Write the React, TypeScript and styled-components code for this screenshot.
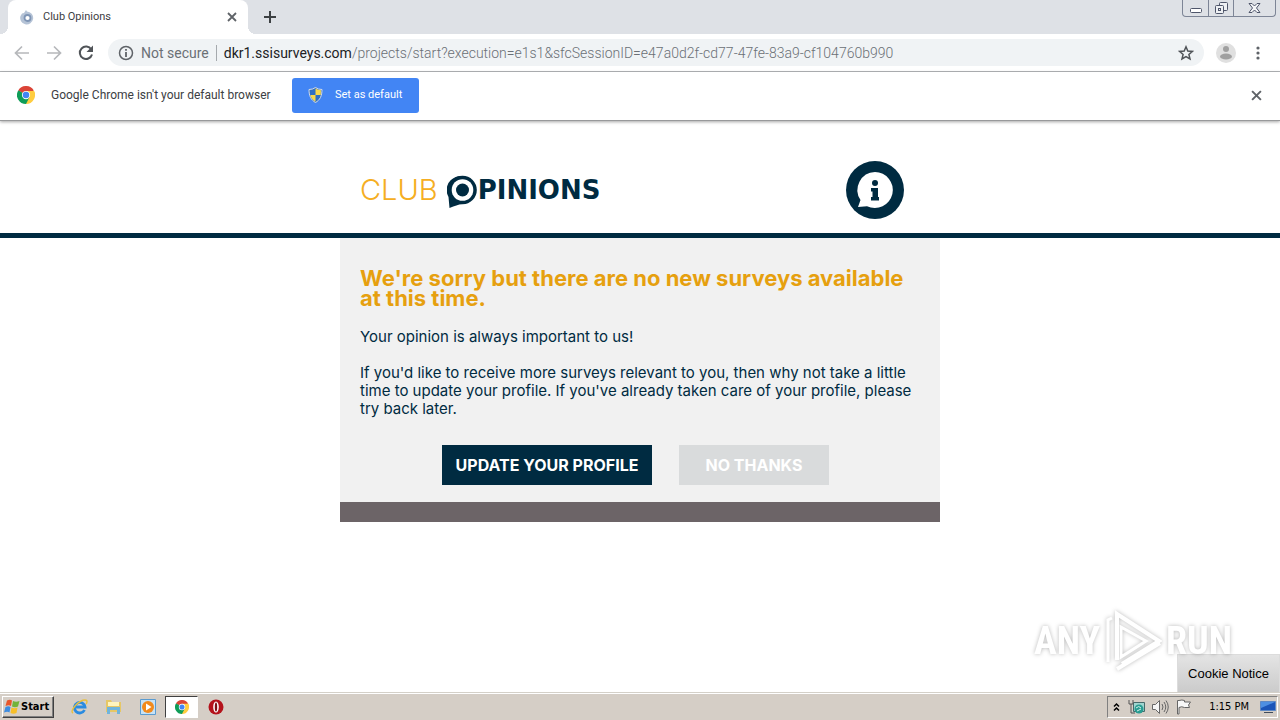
import React from 'react';
import styled, { createGlobalStyle } from 'styled-components';

const NAVY = '#002b41';
const UI_FONT = '"DejaVu Sans Condensed", "Noto Sans", sans-serif';

const GlobalStyle = createGlobalStyle`
  *, *::before, *::after { box-sizing: border-box; }
  body { margin: 0; background: #fff; font-family: "Noto Sans", sans-serif; }
  button { border: 0; padding: 0; background: none; font: inherit; color: inherit; }
  svg { display: block; flex: none; }
`;

const Desktop = styled.div`
  display: flex;
  flex-direction: column;
  min-height: 100vh;
`;

/* ---------- browser chrome ---------- */

const TabStrip = styled.header`
  display: flex;
  height: 34px;
  padding: 0 4px 0 8px;
  background: #dee1e6;
`;

const Tab = styled.div`
  position: relative;
  display: flex;
  align-items: center;
  gap: 8px;
  width: 240px;
  padding: 0 8px 0 12px;
  border-radius: 8px 8px 0 0;
  background: #fff;
  color: #3c4043;
  font: 11px/16px Roboto, sans-serif;

  &::before, &::after {
    content: "";
    position: absolute;
    bottom: 0;
    width: 8px;
    height: 8px;
  }
  &::before { left: -8px; background: radial-gradient(circle at 0 0, #dee1e6 8px, #fff 8px); }
  &::after { right: -8px; background: radial-gradient(circle at 100% 0, #dee1e6 8px, #fff 8px); }
`;

const TabTitle = styled.span`
  flex: 1;
`;

const IconButton = styled.button<{ $size?: number }>`
  display: grid;
  place-items: center;
  flex: none;
  width: ${(p) => p.$size ?? 16}px;
  height: ${(p) => p.$size ?? 16}px;
`;

const NewTab = styled(IconButton)`
  align-self: center;
  margin-left: 12px;
`;

const WindowControls = styled.div`
  display: flex;
  height: 17px;
  margin-left: auto;
  border: 1px solid #7d8596;
  border-top: 0;
  border-radius: 0 0 4px 4px;
`;

const WindowButton = styled.button<{ $wide?: boolean }>`
  display: grid;
  place-items: center;
  width: ${(p) => (p.$wide ? 42 : 25)}px;

  & + & { border-left: 1px solid #7d8596; }
`;

const Toolbar = styled.nav`
  display: flex;
  align-items: center;
  gap: 12px;
  height: 38px;
  padding: 0 12px;
  border-bottom: 1px solid #b4b6b9;
`;

const Omnibox = styled.div`
  display: flex;
  align-items: center;
  flex: 1;
  height: 27px;
  padding: 0 10px;
  border-radius: 14px;
  background: #f0f3f5;
  color: #6b7075;
  font: 14px/20px Roboto, sans-serif;
`;

const Security = styled.span`
  margin-left: 7px;
  padding-right: 7px;
  border-right: 1px solid #a5a9ad;
  line-height: 16px;
`;

const Address = styled.span`
  flex: 1;
  margin-left: 7px;
  white-space: nowrap;
  font-weight: 300;

  b { color: #202124; font-weight: 400; }
`;

const InfoBar = styled.section`
  position: relative;
  display: flex;
  align-items: center;
  height: 49px;
  padding: 0 16px 2px 17px;
  border-bottom: 1px solid #98999b;
  box-shadow: 0 1px 3px rgba(0, 0, 0, 0.35);
  color: #3c4043;
  font: 12px/16px Roboto, sans-serif;
`;

const InfoText = styled.p`
  min-width: 228px;
  margin: 0 13px 0 16px;
`;

const DefaultButton = styled.button`
  display: flex;
  align-items: center;
  gap: 12px;
  width: 127px;
  height: 35px;
  padding-left: 16px;
  border-radius: 3px;
  background: #4285f4;
  color: #fff;
  font-size: 11px;
  white-space: nowrap;
`;

const Spacer = styled.div`
  flex: 1;
`;

/* ---------- web page ---------- */

const Page = styled.main`
  position: relative;
  flex: 1;
`;

const SiteHeader = styled.div`
  padding-top: 40px;
  border-bottom: 5px solid ${NAVY};
`;

const Column = styled.div`
  width: 100%;
  max-width: 600px;
  margin: 0 auto;
`;

const HeaderRow = styled(Column)`
  display: flex;
  justify-content: space-between;
  align-items: center;
  padding: 0 36px 14px 20px;
`;

const Brand = styled.a`
  display: flex;
  align-items: center;
  color: ${NAVY};
  font: 700 26px/32px "DejaVu Sans", sans-serif;
  text-decoration: none;

  svg { margin-top: 4px; }
`;

const BrandClub = styled.span`
  margin-right: 9px;
  color: #f5ae22;
  font-family: Inter, sans-serif;
  font-weight: 300;
  font-size: 29px;
`;

const Card = styled(Column)`
  padding: 30px 20px 17px;
  background: #f1f1f1;
  color: ${NAVY};
  font: 15px/18px Inter, sans-serif;

  h1 { margin: 0 0 20px; color: #e6a00f; font-size: 22px; line-height: 20px; }
  p { margin: 0 0 18px; }
`;

const Actions = styled.div`
  display: flex;
  justify-content: center;
  gap: 27px;
  margin: 27px 9px 0 0;
`;

const ActionButton = styled.button<{ $muted?: boolean }>`
  width: ${(p) => (p.$muted ? 150 : 210)}px;
  height: 40px;
  background: ${(p) => (p.$muted ? '#d9dbdc' : NAVY)};
  color: #fff;
  font-weight: 700;
  font-size: 16px;
  white-space: nowrap;
`;

const CardFooter = styled(Column)`
  height: 20px;
  background: #6c6467;
`;

const CookieNotice = styled.button`
  position: absolute;
  right: 0;
  bottom: 0;
  height: 38px;
  padding: 0 10px;
  border: 1px solid #dcdcdc;
  border-bottom: 0;
  background: linear-gradient(#e4e4e4, #cbcbcb);
  color: #000;
  font: 13px/20px "Liberation Sans", sans-serif;
`;

const Watermark = styled.div`
  position: absolute;
  right: 48px;
  bottom: 20px;
  display: flex;
  align-items: center;
  gap: 4px;
  color: #fff;
  font: 700 38px/60px "Liberation Sans Narrow", "Roboto Condensed", Roboto, sans-serif;
  filter: drop-shadow(0 0 2px rgba(0, 0, 0, 0.28));
  pointer-events: none;
`;

/* ---------- taskbar ---------- */

const Taskbar = styled.footer`
  display: flex;
  align-items: center;
  height: 28px;
  padding: 2px;
  border-top: 1px solid #d4d0c8;
  box-shadow: inset 0 1px #fff;
  background: #d5cec6;
  color: #000;
  font: 11px/16px ${UI_FONT};
`;

const StartButton = styled.button`
  display: flex;
  align-items: center;
  gap: 1px;
  height: 22px;
  width: 52px;
  padding: 0 1px;
  border: 1px solid;
  border-color: #fff #404040 #404040 #fff;
  box-shadow: inset -1px -1px #808080;
  font: 700 11px/16px ${UI_FONT};
`;

const Launcher = styled.div`
  display: flex;
  gap: 1px;
  margin-left: 9px;
`;

const LaunchButton = styled.button<{ $active?: boolean }>`
  display: grid;
  place-items: center;
  width: 33px;
  height: 22px;
  border: 1px solid;
  border-color: ${(p) => (p.$active ? '#404040 #fff #fff #404040' : 'transparent')};
  background: ${(p) => (p.$active ? '#fff' : 'none')};
`;

const Tray = styled.div`
  display: flex;
  align-items: center;
  gap: 7px;
  height: 22px;
  margin-left: auto;
  padding: 0 1px 0 4px;
  border: 1px solid;
  border-color: #808080 #fff #fff #808080;
`;

const Clock = styled.time`
  margin: 0 4px 0 10px;
  white-space: nowrap;
`;

/* ---------- drawings ---------- */

const Cross = ({ size = 9 }: { size?: number }) => (
  <svg width={size} height={size} viewBox="0 0 10 10">
    <path d="M1 1l8 8M9 1l-8 8" stroke="#5f6368" strokeWidth="1.8" />
  </svg>
);

const ChromeLogo = ({ size }: { size: number }) => (
  <svg width={size} height={size} viewBox="0 0 48 48">
    <path d="M24 24L3.2 12A24 24 0 0 1 44.8 12Z" fill="#db4437" />
    <path d="M24 24L44.8 12A24 24 0 0 1 24 48Z" fill="#ffcd40" />
    <path d="M24 24V48A24 24 0 0 1 3.2 12Z" fill="#0f9d58" />
    <path d="M24 13H45.3A24 24 0 0 1 48 24L33.5 29.5Z" fill="#ffcd40" />
    <path d="M14.5 29.5L3.2 12 24 24ZM24 48L33.5 29.5 20 34Z" fill="#0f9d58" />
    <circle cx="24" cy="24" r="11" fill="#fff" />
    <circle cx="24" cy="24" r="8.7" fill="#4285f4" />
  </svg>
);

const Favicon = () => (
  <svg width="15" height="15" viewBox="0 0 15 15">
    <path d="M6 0l1 1.5a6.500 6.500 0 1 1-6.500 4.500l1.500-2.500 2-.5z" fill="#b5c3d6" />
    <circle cx="7.5" cy="8" r="3" fill="#fff" stroke="#7f95b5" strokeWidth="1.8" />
  </svg>
);

const Arrow = ({ back }: { back?: boolean }) => (
  <svg width="16" height="16" viewBox="0 0 16 16" fill="none" stroke="#b6b8bb" strokeWidth="1.7">
    {back ? <path d="M15 8H2M8 1.5L1.5 8 8 14.5" /> : <path d="M1 8h13M8 1.5L14.5 8 8 14.5" />}
  </svg>
);

const Reload = () => (
  <svg width="16" height="16" viewBox="0 0 16 16">
    <path d="M13.3 4.5A6.200 6.200 0 1 0 14 9.500" fill="none" stroke="#505458" strokeWidth="2" />
    <path d="M15 .5v6.500H8.500z" fill="#505458" />
  </svg>
);

const InfoCircle = () => (
  <svg width="16" height="16" viewBox="0 0 16 16">
    <circle cx="8" cy="8" r="6.5" fill="none" stroke="#5f6368" strokeWidth="1.5" />
    <path d="M8 7v5M8 4v1.700" stroke="#5f6368" strokeWidth="1.8" />
  </svg>
);

const Star = () => (
  <svg width="16" height="16" viewBox="0 0 16 16">
    <path
      d="M8 1.800l1.800 4.200 4.600.4-3.500 3 1.100 4.500L8 11.500l-4 2.400 1.100-4.500-3.500-3 4.600-.4z"
      fill="none"
      stroke="#505458"
      strokeWidth="1.5"
    />
  </svg>
);

const Avatar = () => (
  <svg width="20" height="20" viewBox="0 0 20 20">
    <circle cx="10" cy="10" r="10" fill="#e0e0e0" />
    <circle cx="10" cy="6" r="3" fill="#a0a0a0" />
    <ellipse cx="10" cy="13.5" rx="6" ry="3" fill="#a0a0a0" />
  </svg>
);

const Dots = () => (
  <svg width="16" height="16" viewBox="0 0 16 16" fill="#5f6368">
    <circle cx="8" cy="3" r="1.6" />
    <circle cx="8" cy="8" r="1.6" />
    <circle cx="8" cy="13" r="1.6" />
  </svg>
);

const Shield = () => (
  <svg width="15" height="16" viewBox="0 0 15 16">
    <path d="M7.500.5Q10 2.500 14 2.500C14 9 12 13 7.500 15.500 3 13 1 9 1 2.500Q5 2.500 7.500.5z" fill="#2e6fc4" stroke="#d5dbe2" />
    <path d="M7.500 1.500Q10 3 13 3.200L12.700 8H7.500z" fill="#f7d84b" />
    <path d="M7.500 8H2.300c.7 3 2.200 5 5.200 6.700z" fill="#f7d84b" />
  </svg>
);

const BubbleO = () => (
  <svg width="31" height="34" viewBox="0 0 31 34">
    <path d="M2.500 33L1.500 22A14.500 14 0 1 1 15.500 29C11 29.500 8 31 2.500 33z" fill={NAVY} />
    <circle cx="15.500" cy="15" r="14.300" fill={NAVY} />
    <circle cx="15.500" cy="15" r="10.800" fill="#fff" />
    <circle cx="15.500" cy="15" r="6.500" fill={NAVY} />
  </svg>
);

const InfoBubble = () => (
  <svg width="58" height="58" viewBox="0 0 58 58">
    <circle cx="29" cy="29" r="29" fill={NAVY} />
    <path d="M29 11a18 18 0 1 1-8 34.200L12 46l2.500-7A18 18 0 0 1 29 11z" fill="#fff" />
    <circle cx="29" cy="22" r="3" fill={NAVY} />
    <path d="M25 27h7v9h1v3.500h-8V36h1.500v-5.500H25z" fill={NAVY} />
  </svg>
);

const PlayMark = () => (
  <svg width="58" height="62" viewBox="0 0 58 62" fill="none" stroke="#fff" strokeWidth="4">
    <path d="M13 50V4L55 31 18 54" />
    <path d="M4 52V10l4-2M17 17v30l25-16z" strokeWidth="3" />
    <path d="M13 59L56 33" />
  </svg>
);

const WindowsFlag = () => (
  <svg width="16" height="15" viewBox="0 0 16 15">
    <path d="M3 1.500q3-1.500 5 0L7 7Q5 5.500 1.500 7z" fill="#e8562a" />
    <path d="M9 2q3 1.500 6.500 0L14 7.500q-3 1.500-6 0z" fill="#72b33a" />
    <path d="M1.500 8q3-1.500 5 0l-1 5.500q-2-1.500-5.500 0z" fill="#3d8ce0" />
    <path d="M7.500 8.500q3 1.500 6 0L12.500 14q-3 1.500-6 0z" fill="#f7bf29" />
  </svg>
);

const Explorer = () => (
  <svg width="17" height="16" viewBox="0 0 17 16" fill="none">
    <path d="M13.500 11A5.300 5.300 0 1 1 14 8H5" stroke="#2a8be0" strokeWidth="2.8" />
    <path d="M2 14C-2 12 8 1 14 1c3 0 2 3 1 4" stroke="#e8bf3c" strokeWidth="1.4" />
  </svg>
);

const Folder = () => (
  <svg width="17" height="16" viewBox="0 0 17 16">
    <path d="M1 1h5l1 2h9v10H1z" fill="#e6c766" />
    <path d="M3 3h11v4H3z" fill="#fff4bd" />
    <path d="M2 15V8h13v7h-3v-4H5v4z" fill="#70b4dc" />
  </svg>
);

const MediaPlayer = () => (
  <svg width="16" height="16" viewBox="0 0 16 16">
    <path d="M.5.5h15v15H.5z" fill="#c7e2f5" stroke="#5a9bd0" />
    <circle cx="8" cy="8" r="6" fill="#f28a1c" />
    <path d="M6 4.500L11.500 8 6 11.500z" fill="#fff" />
  </svg>
);

const Opera = () => (
  <svg width="16" height="16" viewBox="0 0 16 16">
    <circle cx="8" cy="8" r="7.5" fill="#b4121b" />
    <ellipse cx="8" cy="8" rx="2.8" ry="5.5" fill="#fff" />
    <ellipse cx="8" cy="8" rx="1.2" ry="4.5" fill="#7c1015" />
  </svg>
);

const Network = () => (
  <svg width="17" height="16" viewBox="0 0 17 16">
    <path d="M5.500 3.500h11v9h-11z" fill="#9fd5cf" stroke="#46696a" />
    <path d="M1 1v4h4V1M3 5v9h4" fill="none" stroke="#555" />
    <circle cx="11" cy="10" r="4.5" fill="#299c91" />
    <path d="M8 9q3-3 5 0M9 12l4-2" fill="none" stroke="#d5f1eb" />
  </svg>
);

const Speaker = () => (
  <svg width="17" height="16" viewBox="0 0 17 16" fill="none" stroke="#666">
    <path d="M.5 5.500h3l4-4v13l-4-4h-3z" fill="#f5f5f5" />
    <path d="M10 5q2 3 0 6M12 3q3.500 5 0 10M14 1.500q4.500 6.500 0 13" />
  </svg>
);

const Flag = () => (
  <svg width="16" height="16" viewBox="0 0 16 16" fill="#f8f8f8" stroke="#666">
    <path d="M1.500 1.500h1.500q3-1 5.500 0v1.500h6l-2 3 1 2.500h-5q-3-1.500-5.500 0v6.500H1.500z" />
  </svg>
);

const Monitor = () => (
  <svg width="16" height="14" viewBox="0 0 16 14">
    <path d="M.5 1.500h15v9H.5z" fill="#1c55b8" stroke="#5f89c4" />
    <path d="M1 2h14L1 8z" fill="#4e8fe2" />
    <path d="M4 12.500h9" stroke="#404c5c" />
  </svg>
);

export default function App() {
  return (
    <Desktop>
      <GlobalStyle />
      <TabStrip>
        <Tab>
          <Favicon />
          <TabTitle>Club Opinions</TabTitle>
          <IconButton aria-label="Close tab"><Cross size={10} /></IconButton>
        </Tab>
        <NewTab aria-label="New tab" $size={20}>
          <svg width="12" height="12" viewBox="0 0 12 12">
            <path d="M6 0v12M0 6h12" stroke="#3c4043" strokeWidth="2" />
          </svg>
        </NewTab>
        <WindowControls>
          <WindowButton aria-label="Minimize">
            <svg width="12" height="16" viewBox="0 0 12 16">
              <rect x=".5" y="8.5" width="11" height="4" rx="1" fill="#fff" stroke="#4f566b" />
            </svg>
          </WindowButton>
          <WindowButton aria-label="Restore">
            <svg width="13" height="13" viewBox="0 0 13 13" fill="#eef0f3" stroke="#4f566b">
              <rect x="4.5" y=".5" width="8" height="8" rx="1" />
              <rect x=".5" y="3.5" width="8" height="8" rx="1" />
              <rect x="3.5" y="6.5" width="2" height="2" />
            </svg>
          </WindowButton>
          <WindowButton aria-label="Close window" $wide>
            <svg width="13" height="12" viewBox="0 0 13 12">
              <path
                d="M1 1.500h3l2.500 2.500L9 1.500h3L8.500 6l3.500 4.500H9L6.500 8 4 10.500H1L4.500 6z"
                fill="#f4f5f7"
                stroke="#4f566b"
              />
            </svg>
          </WindowButton>
        </WindowControls>
      </TabStrip>

      <Toolbar>
        <IconButton aria-label="Back" $size={20}><Arrow back /></IconButton>
        <IconButton aria-label="Forward" $size={20}><Arrow /></IconButton>
        <IconButton aria-label="Reload" $size={20}><Reload /></IconButton>
        <Omnibox>
          <InfoCircle />
          <Security>Not secure</Security>
          <Address>
            <b>dkr1.ssisurveys.com</b>/projects/start?execution=e1s1&amp;sfcSessionID=e47a0d2f-cd77-47fe-83a9-cf104760b990
          </Address>
          <IconButton aria-label="Bookmark this page"><Star /></IconButton>
        </Omnibox>
        <IconButton aria-label="Profile" $size={20}><Avatar /></IconButton>
        <IconButton aria-label="Menu" $size={20}><Dots /></IconButton>
      </Toolbar>

      <InfoBar>
        <ChromeLogo size={18} />
        <InfoText>Google Chrome isn't your default browser</InfoText>
        <DefaultButton>
          <Shield />
          Set as default
        </DefaultButton>
        <Spacer />
        <IconButton aria-label="Dismiss"><Cross size={11} /></IconButton>
      </InfoBar>

      <Page>
        <SiteHeader>
          <HeaderRow>
            <Brand href="#" aria-label="Club Opinions">
              <BrandClub>CLUB</BrandClub>
              <BubbleO />
              PINIONS
            </Brand>
            <IconButton aria-label="Information" $size={58}><InfoBubble /></IconButton>
          </HeaderRow>
        </SiteHeader>
        <Card>
          <h1>We're sorry but there are no new surveys available at this time.</h1>
          <p>Your opinion is always important to us!</p>
          <p>
            If you'd like to receive more surveys relevant to you, then why not take a little time to
            update your profile. If you've already taken care of your profile, please try back later.
          </p>
          <Actions>
            <ActionButton>UPDATE YOUR PROFILE</ActionButton>
            <ActionButton $muted>NO THANKS</ActionButton>
          </Actions>
        </Card>
        <CardFooter />
        <CookieNotice>Cookie Notice</CookieNotice>
        <Watermark>
          <span>ANY</span>
          <PlayMark />
          <span>RUN</span>
        </Watermark>
      </Page>

      <Taskbar>
        <StartButton><WindowsFlag />Start</StartButton>
        <Launcher>
          <LaunchButton aria-label="Internet Explorer"><Explorer /></LaunchButton>
          <LaunchButton aria-label="Windows Explorer"><Folder /></LaunchButton>
          <LaunchButton aria-label="Media Player"><MediaPlayer /></LaunchButton>
          <LaunchButton aria-label="Google Chrome" $active><ChromeLogo size={14} /></LaunchButton>
          <LaunchButton aria-label="Opera"><Opera /></LaunchButton>
        </Launcher>
        <Tray>
          <svg width="9" height="10" viewBox="0 0 9 10" fill="none" stroke="#000" strokeWidth="1.5">
            <path d="M2 4.500L4.500 2 7 4.500M2 8.500L4.500 6 7 8.500" />
          </svg>
          <Network />
          <Speaker />
          <Flag />
          <Clock>1:15 PM</Clock>
          <Monitor />
        </Tray>
      </Taskbar>
    </Desktop>
  );
}
